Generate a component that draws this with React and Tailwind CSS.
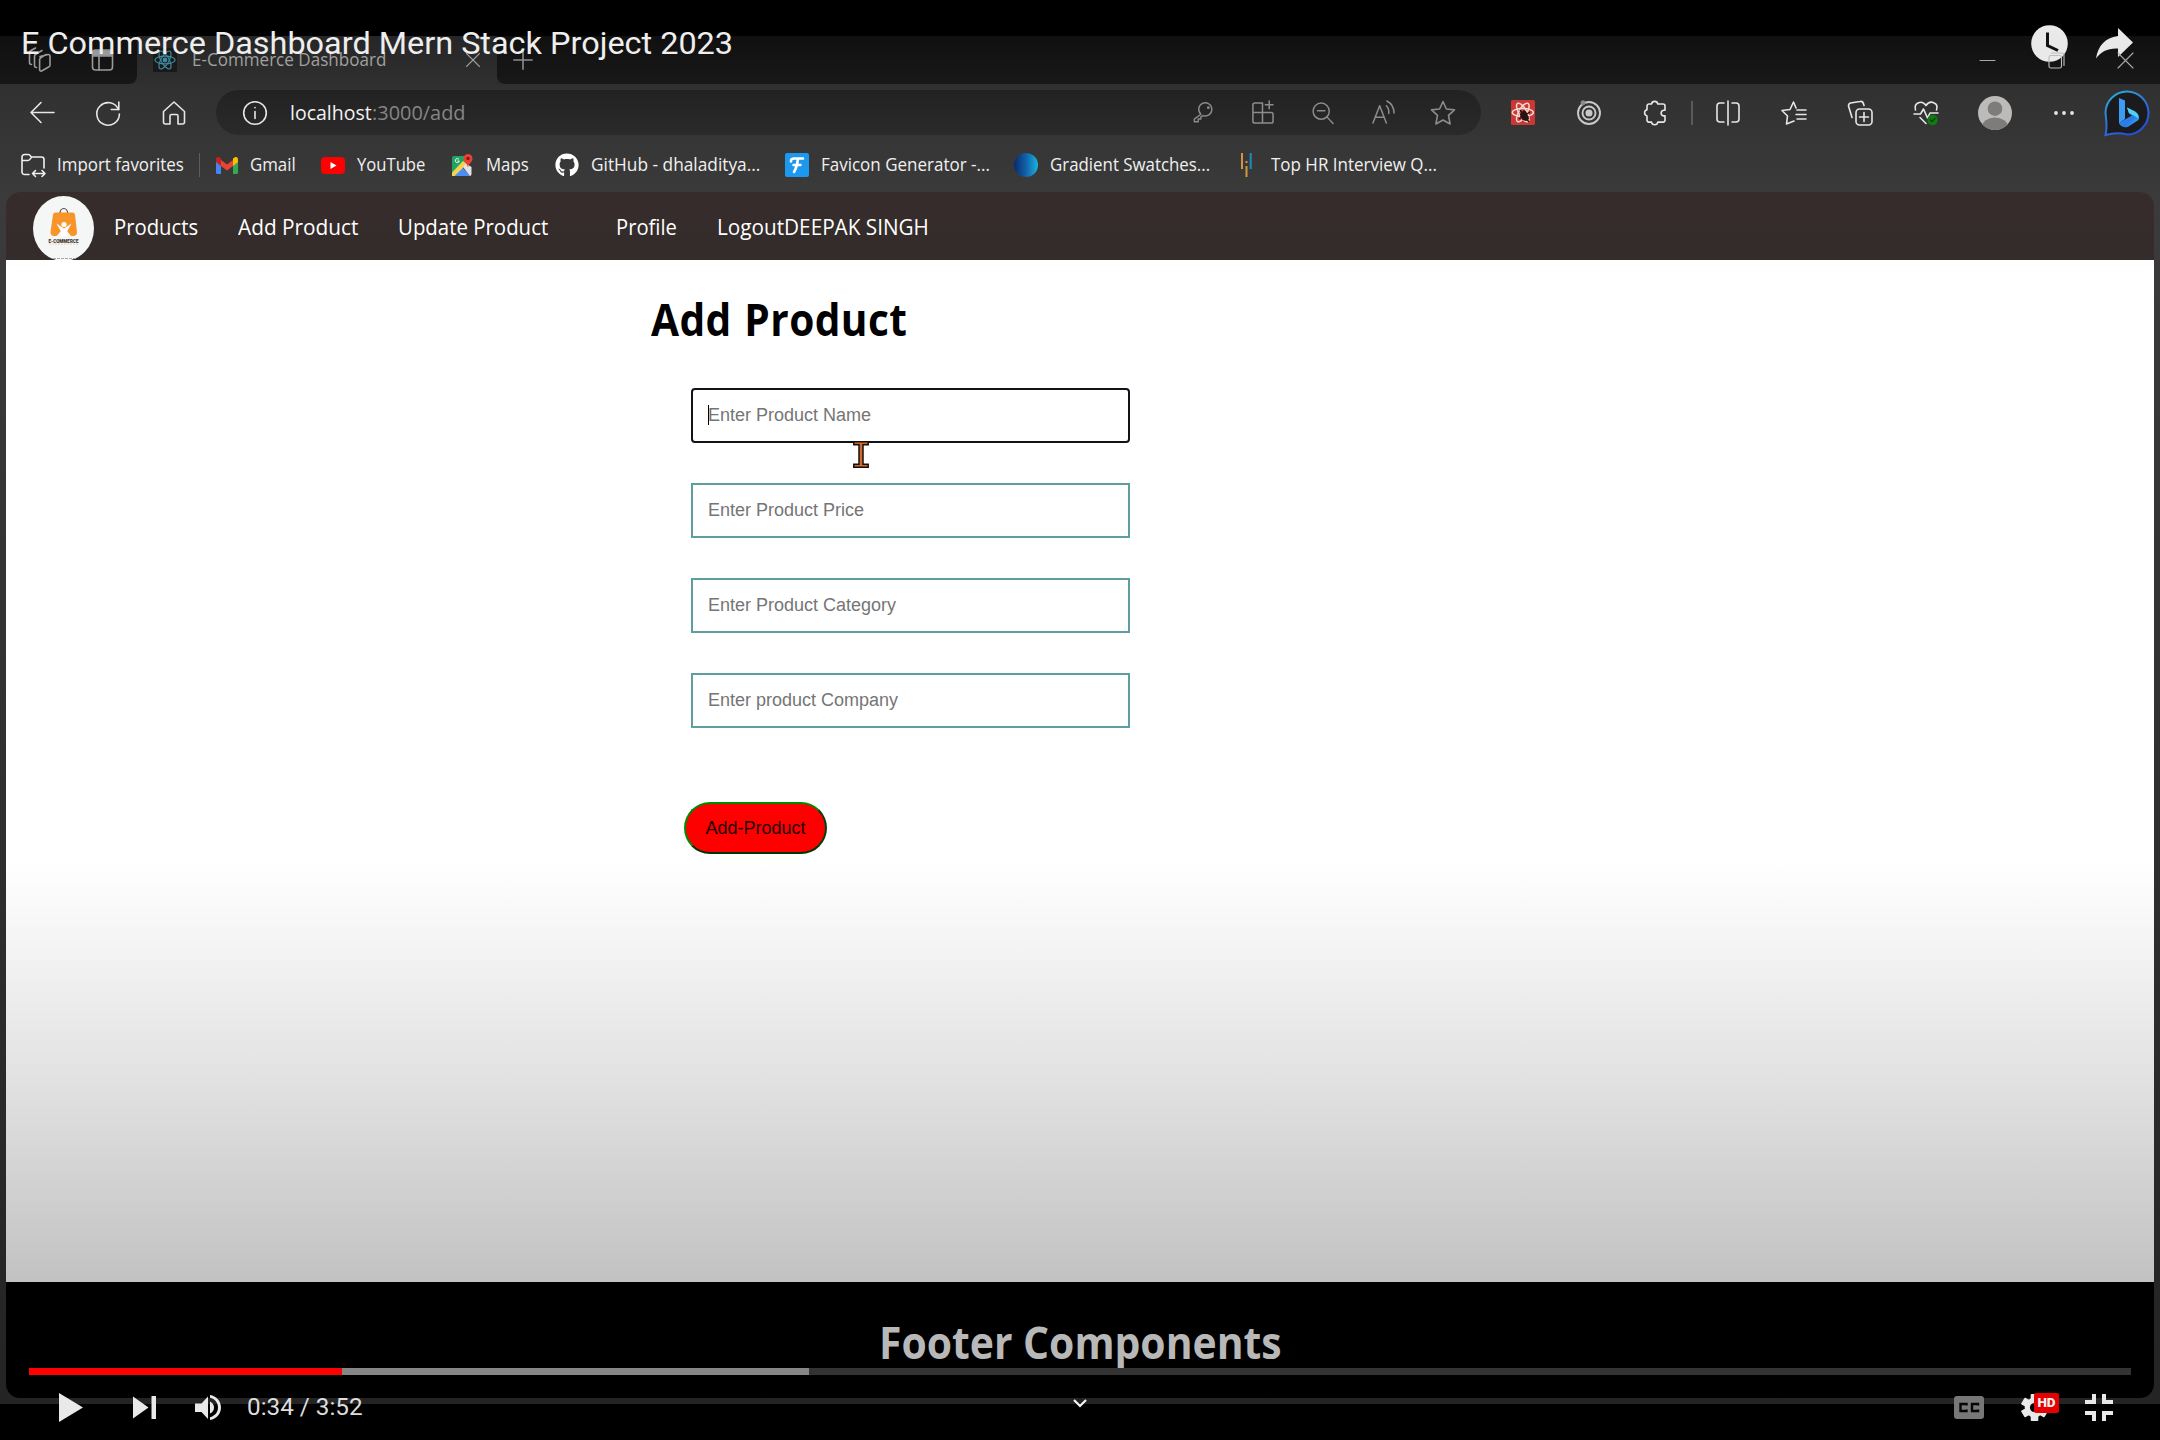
import { useLayoutEffect, useRef, useState } from "react";
import { FaGithub } from "react-icons/fa";

const SEGOE = "font-['Open_Sans','Noto_Sans',sans-serif]";
const ROBOTO = "font-['Roboto',sans-serif]";
const ARIAL = "font-['Liberation_Sans',Arial,sans-serif]";

/* One line of text that is condensed or widened to fill its slot. */
function Label({ w, className = "", children }) {
  const ref = useRef(null);
  const [scale, setScale] = useState(1);
  useLayoutEffect(() => {
    if (ref.current) setScale(w / ref.current.offsetWidth);
  }, [w]);
  return (
    <span className={`block shrink-0 whitespace-nowrap leading-none ${className}`} style={{ width: w }}>
      <span ref={ref} className="inline-block origin-left" style={{ transform: `scaleX(${scale})` }}>
        {children}
      </span>
    </span>
  );
}

function Icon({ size = 24, sw = 1.6, className = "", children }) {
  return (
    <svg
      width={size}
      height={size}
      viewBox="0 0 24 24"
      fill="none"
      stroke="currentColor"
      strokeWidth={sw}
      strokeLinecap="round"
      strokeLinejoin="round"
      className={`block shrink-0 overflow-visible ${className}`}
    >
      {children}
    </svg>
  );
}

function TabStrip() {
  return (
    <div className="flex h-12 bg-[#2c2c2c]">
      <div className="flex h-full w-[137px] items-center rounded-br-lg bg-linear-to-b from-[#101010] to-[#171717] text-[#9a9a9a]">
        <Icon className="ml-[27px]">
          <path d="M13 8.500 21 6.500a1.600 1.600 0 0 1 2 1.500V17a2 2 0 0 1-1.400 2l-7 4a1.500 1.500 0 0 1-2-1.500V12a3 3 0 0 1 1.500-2.500L19 6.500" />
          <path d="M9.500 19.500A2 2 0 0 1 7.500 17.500V8.500a3 3 0 0 1 1.500-2.500l6-3.500" />
          <path d="M4.500 16.500a2 2 0 0 1-2-2V5a3 3 0 0 1 1.500-2.500L8.500 0" />
        </Icon>
        <Icon className="ml-10">
          <rect x="1.500" y="2" width="20" height="20" rx="3" />
          <path d="M1.500 8h20M8 8v14" />
          <path d="M2 3h19v4H2z" fill="currentColor" />
        </Icon>
      </div>
      <div className="flex h-full w-[360px] items-center bg-linear-to-b from-[#262626] to-[#2f2f2f] pl-4 text-[#a0a0a0]">
        <div className="flex size-6 items-center justify-center bg-[#191919]">
          <svg width="22" height="22" viewBox="-12 -12 24 24" fill="none" stroke="#3f8ba0" strokeWidth="1.300">
            <ellipse rx="11" ry="4.300" />
            <ellipse rx="11" ry="4.300" transform="rotate(60)" />
            <ellipse rx="11" ry="4.300" transform="rotate(120)" />
            <circle r="2" fill="#3f8ba0" />
          </svg>
        </div>
        <Label w={194} className={`ml-[15px] text-[17.500px] ${SEGOE}`}>E-Commerce Dashboard</Label>
        <Icon size={14} sw={2.200} className="ml-20"><path d="M1 1l22 22M23 1 1 23" /></Icon>
      </div>
      <div className="flex h-full flex-1 items-center rounded-bl-lg bg-linear-to-b from-[#101010] to-[#181818] text-[#8d8d8d]">
        <Icon size={20} sw={1.900} className="ml-4"><path d="M12 1v22M1 12h22" /></Icon>
        <div className="relative z-20 mr-[27px] ml-auto flex items-center text-[#a9a9a9]">
          <Icon size={15} sw={1.600}><path d="M0 12h24" /></Icon>
          <Icon size={15} sw={1.800} className="ml-[54px] text-[#bdbdbd]">
            <rect x="0" y="4" width="20" height="20" rx="3" />
            <path d="M4 0h16a4 4 0 0 1 4 4v16" />
          </Icon>
          <Icon size={15} sw={1.800} className="ml-[54px]"><path d="M0 0l24 24M24 0 0 24" /></Icon>
        </div>
      </div>
    </div>
  );
}

function Slot({ className = "w-[66px]", children }) {
  return <div className={`flex h-full shrink-0 items-center justify-center ${className}`}>{children}</div>;
}

const PUZZLE =
  "M8.500 3.500a3.200 3.200 0 0 1 6.300 0H20a2 2 0 0 1 2 2v4.200h-1.500a2.900 2.900 0 0 0 0 5.700H22v4.200a2 2 0 0 1-2 2h-5.200a3.200 3.200 0 0 1-6.300 0H6a2 2 0 0 1-2-2v-4.200a3.200 3.200 0 0 1 0-6.200V5.500a2 2 0 0 1 2-2z";

function Toolbar() {
  return (
    <div className="flex h-[57px] items-center pl-[9px] text-[#e6e6e6]">
      <Slot><Icon><path d="M24 11.500H1M11 1.500 1 11.500l10 10" /></Icon></Slot>
      <Slot>
        <Icon>
          <path d="M22.500 8.500A11.300 11.300 0 1 0 23.400 13" />
          <path d="M22.800 1v7.500h-7.500" />
        </Icon>
      </Slot>
      <Slot>
        <Icon>
          <path d="M1.500 10.500 12 1l10.500 9.500V21a2 2 0 0 1-2 2H16v-8a1.500 1.500 0 0 0-1.500-1.500h-5A1.500 1.500 0 0 0 8 15v8H3.500a2 2 0 0 1-2-2z" />
        </Icon>
      </Slot>
      <div className="ml-[9px] flex h-[45px] w-[1265px] items-center rounded-full bg-linear-to-b from-[#222222] to-[#2a2a2a] pr-2 pl-[27px]">
        <Icon>
          <circle cx="12" cy="12" r="11.300" />
          <path d="M12 10.500v7M12 6.500v.3" />
        </Icon>
        <Label w={82} className={`ml-[23px] text-[19.500px] text-[#f2f2f2] ${SEGOE}`}>localhost</Label>
        <Label w={94} className={`text-[19.500px] text-[#858585] ${SEGOE}`}>:3000/add</Label>
        <div className="ml-auto flex h-full text-[#8c8c8c]">
          <Slot className="w-[60px]">
            <Icon size={21}>
              <path d="M9 14 1.500 19.500v3h4.500v-3h3V17l2.500-1.500A7.500 7.500 0 1 0 9 14z" />
              <circle cx="17.500" cy="6.500" r=".8" />
            </Icon>
          </Slot>
          <Slot className="w-[60px]">
            <Icon size={23} className="mr-0.5">
              <path d="M12 2H4a2 2 0 0 0-2 2v17a2 2 0 0 0 2 2h17a2 2 0 0 0 2-2v-7a2 2 0 0 0-2-2H2M12 2v21M19 0v8M15 4h8" />
            </Icon>
          </Slot>
          <Slot className="w-[60px]">
            <Icon size={22}>
              <circle cx="10" cy="10" r="8.800" />
              <path d="M16.500 16.500 23 23.500M6 9.500h8" />
            </Icon>
          </Slot>
          <Slot className="w-[60px]">
            <Icon size={23}>
              <path d="M1 23 8 5l7 18M3.500 17h9M15 5q3 3 2.500 8M15.500 0q7.500 4 7.500 12.500" />
            </Icon>
          </Slot>
          <Slot className="w-[60px]">
            <Icon>
              <path d="m12 .5 3.400 7.500 8.100.9-6 5.500 1.600 8.600L12 19l-7.100 4 1.600-8.600-6-5.500 8.100-.9z" />
            </Icon>
          </Slot>
        </div>
      </div>
      <Slot className="ml-[9px] w-[66px]">
        <svg width="24" height="25" viewBox="0 0 24 25">
          <rect width="24" height="25" rx="1.500" fill="#cb3732" />
          <g fill="none" stroke="#f3d9d6" strokeWidth="1.500" transform="translate(11.800 12.500)">
            <ellipse rx="10.500" ry="4" />
            <ellipse rx="10.500" ry="4" transform="rotate(60)" />
            <ellipse rx="10.500" ry="4" transform="rotate(120)" />
          </g>
          <path d="m10 13 3-3 2.500 2 1 3 1.500 2-2.500 4-4-1-2.500-3.500z" fill="#2a1412" />
          <path d="m9 10 9 12M8 19l11-7M9 14l9 5" stroke="#2a1412" strokeWidth="1.300" />
        </svg>
      </Slot>
      <Slot>
        <Icon sw={1.900} className="text-[#c9c9c9]">
          <circle cx="12" cy="12" r="11" />
          <circle cx="12" cy="12" r="6.500" />
          <circle cx="12" cy="12" r="2.600" fill="currentColor" />
          <circle cx="6" cy="1.800" r="1.500" fill="#8a8a8a" stroke="#8a8a8a" />
        </Icon>
      </Slot>
      <Slot><Icon><path d={PUZZLE} transform="translate(0 -.5)" /></Icon></Slot>
      <div className="ml-[3px] h-6 w-[2px] bg-[#5a5a5a]" />
      <Slot className="ml-[2px] w-[66px]">
        <Icon>
          <path d="M8 2H4a3 3 0 0 0-3 3v13a3 3 0 0 0 3 3h4M16 2h4a3 3 0 0 1 3 3v13a3 3 0 0 1-3 3h-4M12 0v24" />
        </Icon>
      </Slot>
      <Slot>
        <Icon>
          <path d="M14 7 11.500 1 8 8.500l-8 1 5.500 5.500-1 8L12 20M15 9h9M14 13.500h10M15 18h9" />
        </Icon>
      </Slot>
      <Slot>
        <Icon>
          <rect x="8" y="8" width="16" height="16" rx="3.500" />
          <path d="M16 11.500v9M11.500 16h9M4 16.500.5 5A3 3 0 0 1 2.500 2L12 .5a3 3 0 0 1 3.500 2.200L16 4.500" />
        </Icon>
      </Slot>
      <Slot>
        <Icon>
          <path d="M1.500 9C-.5 1.500 8-1.500 12 4.500 16-1.500 25 1.500 22.500 9M0 13h6.500l3-5 4 9 2.500-5h8M6 16.500l6 6" />
          <circle cx="18.500" cy="19" r="5.200" fill="#117a10" stroke="none" />
          <path d="m16.500 19 1.500 1.500 3-3" stroke="#0b3d0b" strokeWidth="1.200" />
        </Icon>
      </Slot>
      <Slot className="w-[72px]">
        <svg width="34" height="34" viewBox="0 0 34 34">
          <clipPath id="avatar"><circle cx="17" cy="17" r="17" /></clipPath>
          <g clipPath="url(#avatar)">
            <rect width="34" height="34" fill="#bdbbb9" />
            <circle cx="17" cy="12.700" r="7.300" fill="#7e7c7a" />
            <ellipse cx="17" cy="31" rx="13" ry="9.500" fill="#7e7c7a" />
          </g>
        </svg>
      </Slot>
      <Slot>
        <svg width="20" height="4" viewBox="0 0 20 4" fill="#e6e6e6">
          <circle cx="2" cy="2" r="1.900" />
          <circle cx="10" cy="2" r="1.900" />
          <circle cx="18" cy="2" r="1.900" />
        </svg>
      </Slot>
      <Slot className="w-[60px]">
        <svg width="46" height="46" viewBox="0 0 46 46" className="overflow-visible">
          <defs>
            <linearGradient id="ring" x1="0" y1="0" x2=".6" y2="1">
              <stop offset="0" stopColor="#27b5d8" />
              <stop offset=".55" stopColor="#2f74dc" />
              <stop offset="1" stopColor="#2351d6" />
            </linearGradient>
            <linearGradient id="bee" x1="0" y1="0" x2="1" y2="1">
              <stop offset="0" stopColor="#3fa2f5" />
              <stop offset=".6" stopColor="#2a78e8" />
              <stop offset="1" stopColor="#35c5ee" />
            </linearGradient>
          </defs>
          <path d="M1.500 45Q3.500 38 1.500 23a21.500 21.500 0 1 1 21.500 21.500Q13 42 1.500 45z" fill="#1b1b1d" stroke="url(#ring)" strokeWidth="2" />
          <path d="M15 8l6 2.500V29l-6 4.500z" fill="#3c9bf3" />
          <path d="M15 33.500 21 29.500 28 25.500l-3-2-2-6 9 4.500q4 3 2.500 8L24 36.800q-5 2-9-3.300z" fill="url(#bee)" />
          <path d="M23 17.500l8 4q4 2.500 3.500 7l-6.500-4-3-1.500z" fill="#4fd0f0" />
        </svg>
      </Slot>
    </div>
  );
}

function Bookmark({ gap, icon, textGap, w, children }) {
  return (
    <div className={`flex items-center ${gap}`}>
      {icon}
      <Label w={w} className={`text-[17.600px] ${SEGOE} ${textGap}`}>{children}</Label>
    </div>
  );
}

function Bookmarks() {
  return (
    <div className="flex h-12 items-center text-[#f0f0f0]">
      <Bookmark
        gap="ml-[21px]"
        textGap="ml-3"
        w={127}
        icon={
          <Icon>
            <path d="M8 21.500H3.500A2.500 2.500 0 0 1 1 19V4A2.500 2.500 0 0 1 3.500 1.500h4q1 0 2 1.500l1 1h10A2.500 2.500 0 0 1 23 6.500V15M1 7.500h6q1.500 0 2.500-2L11 4M12 20.500h12M14.500 17.500l-3 3 3 3M21 17.500l3 3-3 3" />
          </Icon>
        }
      >
        Import favorites
      </Bookmark>
      <div className="ml-[15px] h-6 w-px bg-[#5c5c5c]" />
      <Bookmark
        gap="ml-4"
        textGap="ml-3"
        w={46}
        icon={
          <svg width="22" height="17" viewBox="0 0 22 17">
            <path d="M0 2v13.500A1.500 1.500 0 0 0 1.500 17H5V6z" fill="#4285f4" />
            <path d="M22 2v13.500a1.500 1.500 0 0 1-1.500 1.500H17V6z" fill="#34a853" />
            <path d="m5 3 6 4.500L17 3v6l-6 4.500L5 9z" fill="#ea4335" />
            <path d="M0 2.500C0 0 2.500-.5 4 .7L5 1.500V9L0 5z" fill="#c5221f" />
            <path d="M22 2.500C22 0 19.500-.5 18 .7l-1 .8V9l5-4z" fill="#fbbc04" />
          </svg>
        }
      >
        Gmail
      </Bookmark>
      <Bookmark
        gap="ml-[25px]"
        textGap="ml-3"
        w={68}
        icon={
          <svg width="24" height="17" viewBox="0 0 24 17">
            <rect width="24" height="17" rx="4" fill="#fe0000" />
            <path d="M9.500 5v7l6-3.500z" fill="#fff" />
          </svg>
        }
      >
        YouTube
      </Bookmark>
      <Bookmark
        gap="ml-[27px]"
        textGap="ml-[13px]"
        w={43}
        icon={
          <svg width="21" height="22" viewBox="0 0 21 22" className="overflow-visible">
            <path d="M0 4a2 2 0 0 1 2-2h13v7L8 14l-8 7z" fill="#1fa463" />
            <path d="M1.500 22 10 13l8.500 9z" fill="#4d8df6" />
            <path d="M0 22V18.500L11 7l4 3L2.500 22z" fill="#f7d24c" />
            <path d="m11 13 3-3.500L19.500 13v7a2 2 0 0 1-1.500 2z" fill="#e3e3e3" />
            <path d="M16 13.500c-.5-3.500-4.500-5.500-4.500-9a4.500 4.500 0 0 1 9 0c0 3.500-4 5.500-4.500 9z" fill="#ea4335" />
            <circle cx="16" cy="4.500" r="1.700" fill="#7d1b14" />
            <path d="M7 5.500a2 2 0 1 0 .3 1.500H5.500" stroke="#fff" fill="none" />
          </svg>
        }
      >
        Maps
      </Bookmark>
      <Bookmark gap="ml-[26px]" textGap="ml-3" w={169} icon={<FaGithub size={24} className="text-white" />}>
        GitHub - dhaladitya...
      </Bookmark>
      <Bookmark
        gap="ml-[25px]"
        textGap="ml-3"
        w={169}
        icon={
          <svg width="24" height="24" viewBox="0 0 24 24">
            <rect width="24" height="24" rx="2" fill="#1c98ee" />
            <path d="M6 8.500Q5.500 5.500 9.500 5.500H18M13 5.500Q12 14 9 19M8.500 12h7" stroke="#fff" strokeWidth="2.600" strokeLinecap="round" fill="none" />
          </svg>
        }
      >
        Favicon Generator -...
      </Bookmark>
      <Bookmark
        gap="ml-6"
        textGap="ml-3"
        w={160}
        icon={<div className="size-6 rounded-full bg-linear-to-r from-[#0a2a6c] via-[#1261a8] to-[#1cb5e0]" />}
      >
        Gradient Swatches...
      </Bookmark>
      <Bookmark
        gap="ml-[31px]"
        textGap="ml-[19px]"
        w={166}
        icon={
          <svg width="11" height="24" viewBox="0 0 11 24">
            <path d="M1 0v16M5.500 8v2M5.500 13v11" stroke="#d2953c" strokeWidth="2" />
            <path d="M9.700 0v16" stroke="#1f87b5" strokeWidth="2.200" />
          </svg>
        }
      >
        Top HR Interview Q...
      </Bookmark>
    </div>
  );
}

function BrandLogo() {
  return (
    <svg width="61" height="64" viewBox="0 0 61 64" className="mt-1 ml-[27px] block shrink-0">
      <ellipse cx="30.500" cy="32.500" rx="30.500" ry="32.500" fill="#f5f6f6" />
      <path d="M27 18v-1a3.800 4.500 0 0 1 7.600 0v3M27 17v3" stroke="#5a4638" strokeWidth="1.200" fill="none" />
      <path d="M22.500 16.500h17a2.500 2.500 0 0 1 2.500 2l2 17.500a3.500 3.500 0 0 1-3.500 4H38l-4-5h-6l-4.500 5H21a3.500 3.500 0 0 1-3.500-4l2.500-17.500a2.500 2.500 0 0 1 2.500-2z" fill="#f8952a" />
      <circle cx="31" cy="28.500" r="2.600" fill="#fff" />
      <path d="m23.500 27.500 7.500 5 7.500-5-4.500 8v4.500h-6v-4.500z" fill="#fff" />
      <text x="30.500" y="46.500" textAnchor="middle" textLength="30" fontSize="4.600" fontWeight="900" fill="#3a3030" fontFamily="Roboto, sans-serif">E-COMMERCE</text>
      <path d="M16 48h29" stroke="#edcfa0" strokeWidth="1.200" strokeDasharray="2 1" />
      <path d="M20 62.500h23" stroke="#a9a9a9" strokeWidth="1.200" strokeDasharray="3 1" />
    </svg>
  );
}

function Navbar() {
  const text = `pt-[2px] text-[21.500px] text-white ${SEGOE}`;
  return (
    <nav className="flex h-[68px] items-center rounded-t-[14px] bg-linear-to-b from-[#372c2c] to-[#322c2a]">
      <BrandLogo />
      <Label w={84} className={`ml-5 ${text}`}>Products</Label>
      <Label w={120} className={`ml-10 ${text}`}>Add Product</Label>
      <Label w={150} className={`ml-10 ${text}`}>Update Product</Label>
      <Label w={61} className={`ml-[68px] ${text}`}>Profile</Label>
      <Label w={212} className={`ml-10 ${text}`}>LogoutDEEPAK SINGH</Label>
    </nav>
  );
}

const FIELDS = [
  { text: "Enter Product Name", w: 163, focused: true },
  { text: "Enter Product Price", w: 156 },
  { text: "Enter Product Category", w: 188 },
  { text: "Enter product Company", w: 190 },
];

function Field({ text, w, focused }) {
  return (
    <div
      className={`relative flex h-[55px] w-[439px] items-center border-2 bg-white pb-[2px] pl-[15px] ${
        focused ? "rounded-[4px] border-[#101418]" : "border-[#5f9ea0]"
      }`}
    >
      {focused && <div className="absolute top-[15px] left-[15px] h-5 w-px bg-black" />}
      <Label w={w} className={`text-[18px] text-[#757575] ${ARIAL}`}>{text}</Label>
      {focused && (
        <svg width="16" height="27" viewBox="0 0 16 27" className="absolute top-[51px] left-[160px]">
          <path d="M.8.800h14.400v3H10v19.400h5.200v3H.8v-3H6V3.800H.8z" fill="#d0692b" stroke="#141010" strokeWidth="1.500" />
        </svg>
      )}
    </div>
  );
}

function ProductPage() {
  return (
    <main className="h-[1022px] bg-linear-to-b from-white from-59% via-[#e2e2e2] via-80% to-[#c2c2c2]">
      <div className="flex flex-col items-start pl-[645px]">
        <h1 className="mt-[37px]">
          <Label w={256} className={`text-[44px] font-bold text-black ${SEGOE}`}>
            <span className="tracking-[0.01em] [word-spacing:0.04em]">Add Product</span>
          </Label>
        </h1>
        <div className="mt-[47px] ml-10 flex flex-col gap-10">
          {FIELDS.map((f) => <Field key={f.text} {...f} />)}
        </div>
        <button className="mt-[74px] ml-[33px] flex h-[52px] w-[143px] items-center justify-center rounded-[26px] border-2 border-t-[#008a00] border-r-[#00400c] border-b-[#003300] border-l-[#008a00] bg-[#ff0000] pb-px">
          <Label w={100} className={`text-left text-[18px] text-[#1c0000] ${ARIAL}`}>Add-Product</Label>
        </button>
      </div>
    </main>
  );
}

function PlayerTop() {
  return (
    <div className="absolute inset-x-0 top-0 z-10 flex h-[86px] items-center pl-[21px]">
      <Label w={712} className={`text-[32px] text-[#eeeeee] ${ROBOTO}`}>E Commerce Dashboard Mern Stack Project 2023</Label>
      <svg width="37" height="37" viewBox="0 0 37 37" className="ml-auto block">
        <circle cx="18.500" cy="18.500" r="18.300" fill="#e9e9e9" />
        <path d="M16.500 7.500v13l10.500 5" fill="none" stroke="#121212" strokeWidth="3" />
      </svg>
      <svg width="37" height="31" viewBox="0 0 37 31" className="mr-[27px] ml-[28px] block">
        <path d="M22 0 37 14.500 22 29v-8.500C12 20 5 23.500 0 30.500 2 18 9 9.500 22 8z" fill="#e9e9e9" />
      </svg>
    </div>
  );
}

function PlayerControls() {
  return (
    <div className="absolute inset-x-0 bottom-0 z-10 flex h-[72px] flex-col">
      <div className="mx-[29px] flex h-[7px] bg-[#333333]">
        <div className="h-full w-[313px] bg-[#ff0000]" />
        <div className="h-full w-[467px] bg-[#868686]" />
      </div>
      <div className="flex flex-1 items-center pl-[59px]">
        <svg width="24" height="29" viewBox="0 0 24 29"><path d="M0 0v29l24-14.500z" fill="#e9e9e9" /></svg>
        <svg width="23" height="23" viewBox="0 0 23 23" className="ml-[50px]">
          <path d="M0 .5v22l15.500-11zM18.500 0H23v23h-4.500z" fill="#e9e9e9" />
        </svg>
        <svg width="26" height="25" viewBox="0 0 26 25" className="ml-[39px]">
          <path d="M0 8.500v8.500h6.500l6.500 7V1.500l-6.500 7zM15 6.500v12q4-2 4-6t-4-6zM15 0v2.800c5 1.200 8 5 8 9.700s-3 8.500-8 9.700V25c6.500-1 11-6 11-12.500S21.500 1 15 0z" fill="#e9e9e9" />
        </svg>
        <Label w={116} className={`ml-[26px] text-[23px] text-[#dddddd] ${ROBOTO}`}>0:34 / 3:52</Label>
        <svg width="14" height="9" viewBox="0 0 14 9" className="mb-[9px] ml-[710px]">
          <path d="m1 1 6 6 6-6" fill="none" stroke="#f5f5f5" strokeWidth="2.200" />
        </svg>
        <svg width="30" height="23" viewBox="0 0 30 23" className="ml-[867px]">
          <rect width="30" height="23" rx="3" fill="#777" />
          <path d="M12.500 9.500V8h-6v7h6v-1.500M24 9.500V8h-6v7h6v-1.500" fill="none" stroke="#050505" strokeWidth="2.400" />
        </svg>
        <div className="relative ml-[37px] h-[27px] w-[38px]">
          <svg width="27" height="27" viewBox="-13.500 -13.500 27 27" className="block">
            <g fill="#e9e9e9">
              <rect x="-3.800" y="-13.500" width="7.600" height="27" rx=".8" />
              <rect x="-3.800" y="-13.500" width="7.600" height="27" rx=".8" transform="rotate(60)" />
              <rect x="-3.800" y="-13.500" width="7.600" height="27" rx=".8" transform="rotate(120)" />
              <circle r="9.800" />
            </g>
            <circle r="4.600" fill="#050505" />
          </svg>
          <div className={`absolute -top-px left-[13px] flex h-5 w-[25px] items-center justify-center rounded-[2px] bg-[#e60000] text-[13.500px] leading-none font-black text-[#eeeeee] ${ROBOTO}`}>
            HD
          </div>
        </div>
        <svg width="28" height="27" viewBox="0 0 28 27" className="ml-[26px]">
          <path d="M9 0v8H0M19 0v8h9M9 27v-8H0M19 27v-8h9" fill="none" stroke="#e9e9e9" strokeWidth="4" />
        </svg>
      </div>
    </div>
  );
}

export default function App() {
  return (
    <div className="relative h-[1440px] w-[2160px] overflow-hidden bg-black pt-9">
      <div className="flex h-[1368px] flex-col bg-linear-to-b from-[#2c2c2c] via-[#3b3b3b] via-12% to-[#242424]">
        <TabStrip />
        <Toolbar />
        <Bookmarks />
        <div className="mx-[6px] mt-[3px] flex h-[1206px] flex-col overflow-hidden rounded-[14px]">
          <Navbar />
          <ProductPage />
          <footer className="flex flex-1 justify-center bg-black pt-[38px]">
            <Label w={403} className={`text-[44px] font-bold text-[#b8b8b8] ${SEGOE}`}>Footer Components</Label>
          </footer>
        </div>
      </div>
      <PlayerTop />
      <PlayerControls />
    </div>
  );
}
